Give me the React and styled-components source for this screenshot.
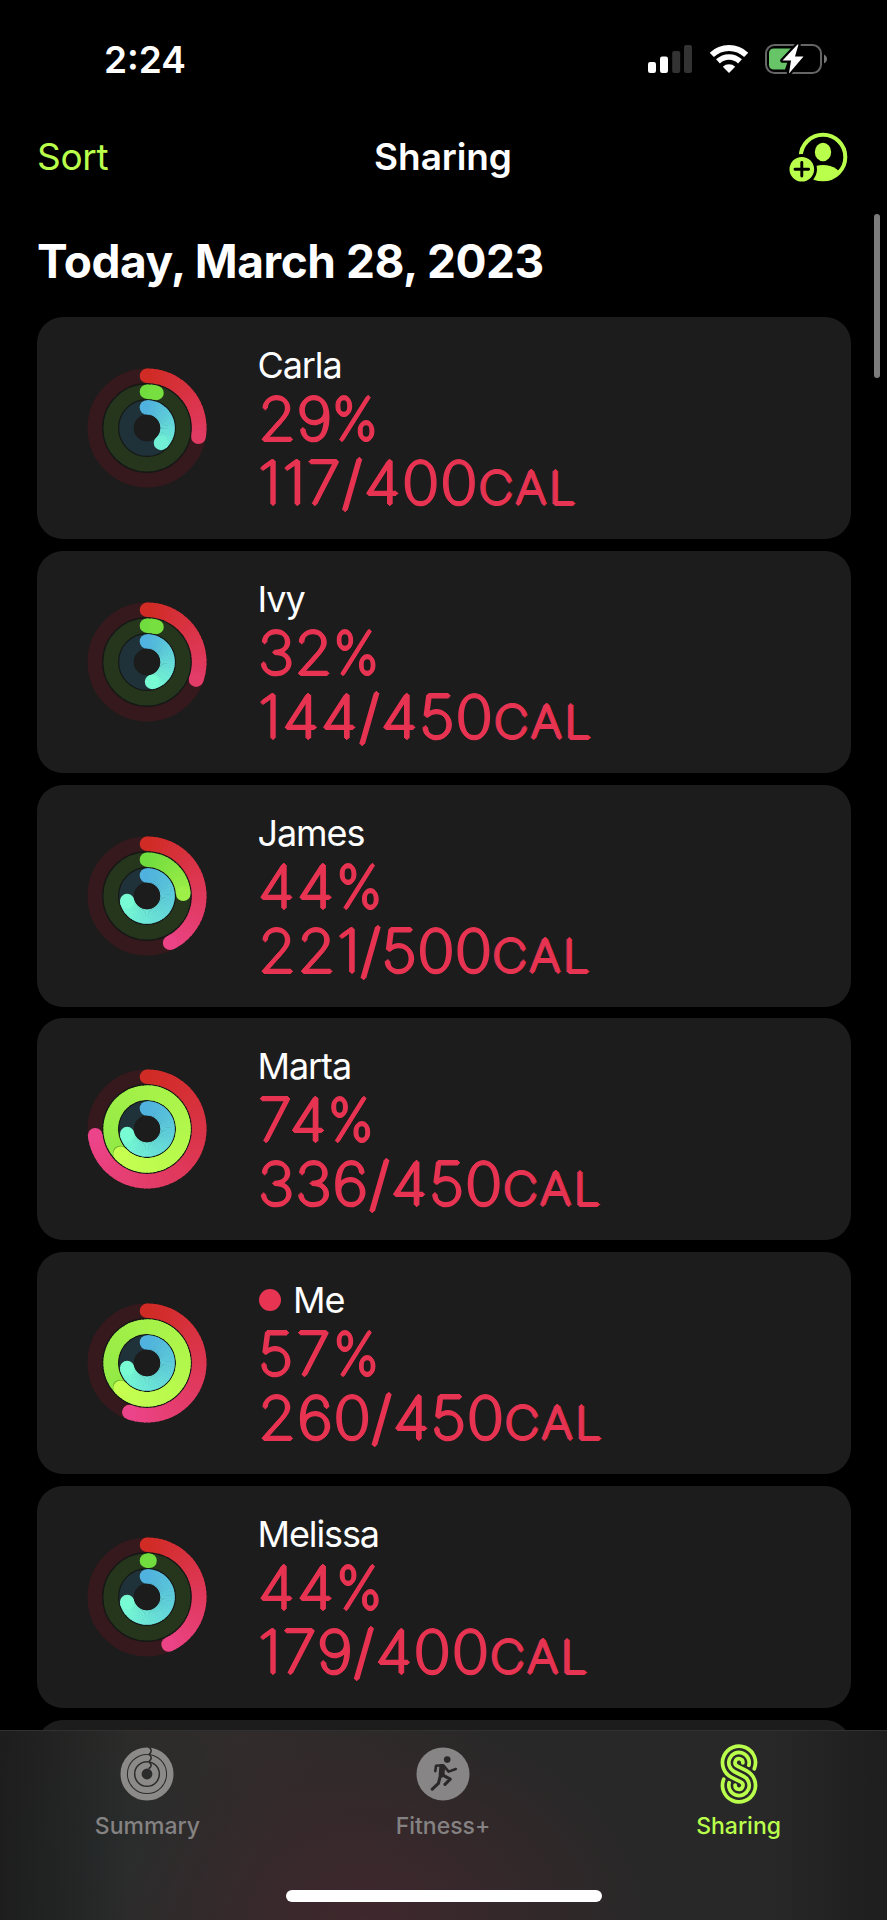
import React from "react";
import styled, {createGlobalStyle} from "styled-components";

const GREEN = "#b9ff4b";
const RED = "#e73452";

const GlobalStyle = createGlobalStyle`
  * {
    box-sizing: border-box;
  }

  body {
    margin: 0;
    background: #000;
    font-family: Inter, "Liberation Sans", sans-serif;
  }
`;

const Screen = styled.div`
  position: relative;
  display: flex;
  flex-direction: column;
  width: 887px;
  height: 1920px;
  overflow: hidden;
  color: #fff;
  background-color: #000;
`;

const StatusBar = styled.div`
  display: flex;
  flex: 0 0 118px;
  align-items: center;
  justify-content: space-between;
  padding: 0 59.5px 0 104px;
`;

const Time = styled.div`
  font-size: 37px;
  font-weight: 600;
`;

const StatusIcons = styled.div`
  display: flex;
  align-items: center;
  gap: 16px;
`;

const NavBar = styled.div`
  display: grid;
  flex: 0 0 79px;
  grid-template-columns: 1fr auto 1fr;
  align-items: center;
  padding: 0 38px 2px 37px;
`;

const SortButton = styled.div`
  font-size: 37px;
  letter-spacing: -0.3px;
  color: ${GREEN};
`;

const NavTitle = styled.div`
  font-size: 37px;
  font-weight: 600;
  letter-spacing: -0.1px;
`;

const AddFriend = styled.div`
  display: flex;
  justify-content: flex-end;
  padding-right: 1px;
`;

const DateHeading = styled.h1`
  flex: 0 0 120px;
  margin: 0;
  padding: 32px 37px 0;
  font-size: 46px;
  font-weight: 700;
  line-height: 64px;
  letter-spacing: -0.45px;
`;

const CardList = styled.div`
  display: flex;
  flex-direction: column;
  gap: 11.8px;
  padding: 0 36.5px;
`;

const Card = styled.div`
  display: flex;
  flex: 0 0 222px;
  align-items: center;
  padding-left: 49px;
  border-radius: 26px;
  background-color: #1c1c1c;
`;

const CardInfo = styled.div`
  align-self: flex-start;
  margin-left: 50px;
  padding-top: 26px;
`;

const Name = styled.div`
  display: flex;
  align-items: center;
  gap: 12px;
  font-size: 36px;
  line-height: 44px;
  letter-spacing: -1.1px;
`;

const Dot = styled.span`
  width: 22px;
  height: 22px;
  margin-left: 1.5px;
  border-radius: 50%;
  background-color: ${RED};
`;

// Offsets of a small disc: as zero-blur shadows they thicken a thin weight and round its ends
const roundedStroke = [
  [1, 0],
  [-1, 0],
  [0, 1],
  [0, -1],
  [2, 0],
  [-2, 0],
  [0, 2],
  [0, -2],
  [1, 1],
  [-1, 1],
  [1, -1],
  [-1, -1],
]
  .map(([x, y]) => `${x}px ${y}px ${RED}`)
  .join(", ");

const Metric = styled.div`
  font-size: 58.5px;
  font-weight: 100;
  line-height: 64px;
  white-space: nowrap;
  letter-spacing: ${(p) => p.$spacing}px;
  color: ${RED};
  text-shadow: ${roundedStroke};
  transform: scaleX(1.06);
  transform-origin: left;
`;

const PercentSign = styled.span`
  display: inline-block;
  transform: scaleX(0.87);
  transform-origin: left;
`;

const Unit = styled.span`
  font-size: 45px;
  line-height: 0;
  letter-spacing: 2.8px;
`;

const ScrollThumb = styled.div`
  position: absolute;
  top: 214px;
  right: 7px;
  width: 6.5px;
  height: 164px;
  border-radius: 4px;
  background-color: #7c7c7c;
`;

const TabBar = styled.div`
  position: absolute;
  right: 0;
  bottom: 0;
  left: 0;
  display: flex;
  flex-direction: column;
  align-items: center;
  height: 190px;
  border-top: 1px solid #313131;
  background: linear-gradient(
      90deg,
      rgba(28, 28, 28, 0.9) 0,
      rgba(28, 28, 28, 0) 130px,
      rgba(28, 28, 28, 0) 770px,
      rgba(28, 28, 28, 0.9) 100%
    ),
    radial-gradient(ellipse 290px 210px at 365px 190px, #40282d, rgba(64, 40, 45, 0)),
    radial-gradient(ellipse 170px 170px at 130px 130px, #282e2d, rgba(40, 46, 45, 0)),
    radial-gradient(ellipse 260px 150px at 230px 10px, #312c2b, rgba(49, 44, 43, 0)), #282828;
`;

const Tabs = styled.div`
  display: grid;
  grid-template-columns: repeat(3, 295.6px);
  height: 159px;
  margin-right: 1px;
`;

const Tab = styled.div`
  display: flex;
  flex-direction: column;
  align-items: center;
  padding-top: 10.5px;
  font-size: 23px;
  font-weight: 500;
  line-height: 30px;
  color: ${(p) => (p.$active ? GREEN : "#848282")};

  svg {
    margin-bottom: 5px;
  }
`;

const HomeIndicator = styled.div`
  width: 316px;
  height: 12px;
  border-radius: 6px;
  background-color: #fff;
`;

const SignalIcon = () => (
  <svg width="45" height="30" viewBox="0 0 45 30">
    <rect x="0" y="18" width="8" height="11" rx="2.2" fill="#fff" />
    <rect x="12" y="12.5" width="8" height="16.5" rx="2.2" fill="#fff" />
    <rect x="24.2" y="7" width="8" height="22" rx="2.2" fill="#333" />
    <rect x="36" y="1" width="8" height="28" rx="2.2" fill="#333" />
  </svg>
);

const WifiIcon = () => (
  <svg width="40" height="30" viewBox="-20 -29 40 30" fill="none" stroke="#fff">
    <path d="M-17.2 -18.1 A25 25 0 0 1 17.2 -18.1" strokeWidth="6" />
    <path d="M-11 -11.6 A16 16 0 0 1 11 -11.6" strokeWidth="5.6" />
    <path d="M0 0 L-6.2 -6.2 A9 9 0 0 1 6.2 -6.2 Z" fill="#fff" stroke="none" />
  </svg>
);

const BatteryIcon = () => (
  <svg width="63" height="32" viewBox="0 0 63 32">
    <rect x="1" y="2" width="55" height="28" rx="8.5" fill="none" stroke="#666" strokeWidth="2" />
    <path d="M59 11.5 C63 13.5 63 18.5 59 20.5 Z" fill="#777" />
    <path d="M9 5.5 H27 L20 26.5 H9 Q4 26.5 4 21.5 V10.5 Q4 5.5 9 5.5 Z" fill="#67c568" />
    <path
      d="M32.5 1.6 L17.5 17.6 H26 L24 30.4 L38.5 13.6 H30 L33.5 1.6 Z"
      fill="#fff"
      stroke="#000"
      strokeWidth="4.5"
      strokeLinejoin="round"
      paintOrder="stroke"
    />
  </svg>
);

const AddFriendIcon = () => (
  <svg width="59" height="52" viewBox="0 0 59 52">
    <defs>
      <clipPath id="avatar">
        <circle cx="34" cy="26" r="23" />
      </clipPath>
    </defs>
    <circle cx="34" cy="26" r="22.3" fill="none" stroke={GREEN} strokeWidth="4" />
    <ellipse cx="34" cy="21" rx="8.2" ry="9.2" fill={GREEN} />
    <ellipse cx="34" cy="48" rx="19" ry="14" fill={GREEN} clipPath="url(#avatar)" />
    <path d="M0 24 H16 V30 H0 Z" fill="#000" />
    <circle cx="12.8" cy="38.3" r="15.2" fill="#000" />
    <circle cx="12.8" cy="38.3" r="12.3" fill={GREEN} />
    <path d="M6 38.3 H19.6 M12.8 31.5 V45.1" stroke="#000" strokeWidth="2.9" strokeLinecap="round" />
  </svg>
);

const SummaryIcon = () => (
  <svg width="54" height="64" viewBox="-27 -32 54 64" fill="none">
    <g stroke="#8b8a88">
      <circle r="23.3" strokeWidth="6.4" />
      <circle r="16.1" strokeWidth="6" />
      <circle r="8.5" strokeWidth="6.2" />
    </g>
    <path
      d="M1.5 -27 C5 -25.5 5 -21.5 2 -19.8 M2 -19.4 C5 -18 5 -14.3 2 -12.8 M2 -11.8 C5 -10.5 5 -7 1.5 -5.3"
      stroke="#2c2b2a"
      strokeWidth="1.6"
    />
  </svg>
);

const RunnerIcon = () => (
  <svg width="54" height="64" viewBox="-27 -32 54 64" fill="none">
    <circle r="26.5" fill="#888586" />
    <g stroke="#2c2829" strokeLinecap="round" strokeLinejoin="round">
      <circle cx="4.2" cy="-14.4" r="3.3" fill="#2c2829" stroke="none" />
      <path d="M-0.8 -7 L-1.4 0.5" strokeWidth="5.8" />
      <path d="M-1 -8.8 L-7 -8.2 L-7.7 -2.8" strokeWidth="2.6" />
      <path d="M1 -8 L5.6 -2.4 L12.8 -5" strokeWidth="2.6" />
      <path d="M-2.4 1 L-4.6 9.4 L-10.7 15.2" strokeWidth="3.1" />
      <path d="M0 1.2 L7.2 5.2 L2 10.4" strokeWidth="3.1" />
    </g>
  </svg>
);

// One strand of the S: round the upper lobe, across the diagonal, round the lower lobe
const strand = (top, bottom, topAngle, bottomAngle) => {
  const half = 11.4;
  const cos = (top + bottom) / (2 * half);
  const sin = Math.sqrt(1 - cos * cos);
  const a = (topAngle * Math.PI) / 180;
  const b = (bottomAngle * Math.PI) / 180;
  return [
    `M${Math.cos(a) * top} ${Math.sin(a) * top - half}`,
    `A${top} ${top} 0 1 0 ${-sin * top} ${cos * top - half}`,
    `L${sin * bottom} ${half - cos * bottom}`,
    `A${bottom} ${bottom} 0 1 1 ${-Math.cos(b) * bottom} ${half - Math.sin(b) * bottom}`,
  ].join(" ");
};

const SharingIcon = () => (
  <svg width="54" height="64" viewBox="-27 -32 54 64" fill="none" stroke={GREEN} strokeWidth="3.7" strokeLinecap="round">
    <path d={strand(16.5, 3.9, 22, 4)} />
    <path d={strand(10.2, 10.2, 15, 15)} />
    <path d={strand(3.9, 16.5, 4, 22)} />
  </svg>
);

const point = (turn, r) => {
  const angle = turn * Math.PI * 2;
  return [Math.sin(angle) * r, -Math.cos(angle) * r];
};

const mix = (from, to, t) => `rgb(${from.map((c, i) => Math.round(c + (to[i] - c) * t)).join(",")})`;

const Ring = ({radius, track, from, to, value}) => {
  const span = Math.max(value, 0.45);
  const count = Math.max(2, Math.round(value * 80));
  const [endX, endY] = point(value, radius);

  const segments = Array.from({length: count}, (_, i) => {
    const [x1, y1] = point((i / count) * value, radius);
    const [x2, y2] = point(Math.min(value, ((i + 1.3) / count) * value), radius);
    return (
      <path
        key={i}
        d={`M${x1} ${y1} A${radius} ${radius} 0 0 1 ${x2} ${y2}`}
        stroke={mix(from, to, ((i + 0.5) / count) * (value / span))}
      />
    );
  });

  return (
    <g fill="none" strokeWidth="14.6">
      <circle r={radius} stroke={track} />
      <circle cy={-radius} r="7.3" fill={mix(from, to, 0)} stroke="none" />
      {segments.slice(0, -4)}
      {value > 1 && (
        <circle cx={endX - 0.5} cy={endY - 0.9} r="7.2" fill="rgba(40, 80, 15, 0.4)" stroke="none" />
      )}
      {segments.slice(-4)}
      <circle cx={endX} cy={endY} r="7.3" fill={mix(from, to, value / span)} stroke="none" />
    </g>
  );
};

const ActivityRings = ({move, exercise, stand}) => (
  <svg width="122" height="122" viewBox="-61 -61 122 122">
    <circle r="46" fill="#151816" />
    <Ring radius={52.2} track="#35191c" from={[208, 43, 36]} to={[236, 68, 138]} value={move} />
    <Ring radius={36.3} track="#25361d" from={[112, 220, 62]} to={[198, 255, 80]} value={exercise} />
    <Ring radius={20.5} track="#203239" from={[80, 178, 222]} to={[120, 252, 212]} value={stand} />
    <circle r="13.2" fill="#1c1c1c" />
  </svg>
);

// spacing holds the tracking of the percentage and of the calorie line
const friends = [
  {name: "Carla", percent: 29, calories: "117/400", rings: [0.277, 0.042, 0.38], spacing: [0.3, 1.5]},
  {name: "Ivy", percent: 32, calories: "144/450", rings: [0.305, 0.042, 0.46], spacing: [0.3, 1.5]},
  {name: "James", percent: 44, calories: "221/500", rings: [0.427, 0.24, 0.71], spacing: [2.1, 0.9]},
  {name: "Marta", percent: 74, calories: "336/450", rings: [0.731, 1.63, 0.71], spacing: [1.2, 1.3]},
  {name: "Me", percent: 57, calories: "260/450", rings: [0.555, 1.63, 0.71], spacing: [3.2, 1.1], isMe: true},
  {name: "Melissa", percent: 44, calories: "179/400", rings: [0.432, 0.011, 0.71], spacing: [2.1, 1.5]},
];

const App = () => (
  <>
    <GlobalStyle />
    <Screen>
      <StatusBar>
        <Time>2:24</Time>
        <StatusIcons>
          <SignalIcon />
          <WifiIcon />
          <BatteryIcon />
        </StatusIcons>
      </StatusBar>
      <NavBar>
        <SortButton>Sort</SortButton>
        <NavTitle>Sharing</NavTitle>
        <AddFriend>
          <AddFriendIcon />
        </AddFriend>
      </NavBar>
      <DateHeading>Today, March 28, 2023</DateHeading>
      <CardList>
        {friends.map(({name, percent, calories, rings, spacing, isMe}) => (
          <Card key={name}>
            <ActivityRings move={rings[0]} exercise={rings[1]} stand={rings[2]} />
            <CardInfo>
              <Name>
                {isMe && <Dot />}
                {name}
              </Name>
              <Metric $spacing={spacing[0]}>
                {percent}
                <PercentSign>%</PercentSign>
              </Metric>
              <Metric $spacing={spacing[1]}>
                {calories}
                <Unit>CAL</Unit>
              </Metric>
            </CardInfo>
          </Card>
        ))}
        <Card />
      </CardList>
      <ScrollThumb />
      <TabBar>
        <Tabs>
          <Tab>
            <SummaryIcon />
            Summary
          </Tab>
          <Tab>
            <RunnerIcon />
            Fitness+
          </Tab>
          <Tab $active>
            <SharingIcon />
            Sharing
          </Tab>
        </Tabs>
        <HomeIndicator />
      </TabBar>
    </Screen>
  </>
);

export default App;
